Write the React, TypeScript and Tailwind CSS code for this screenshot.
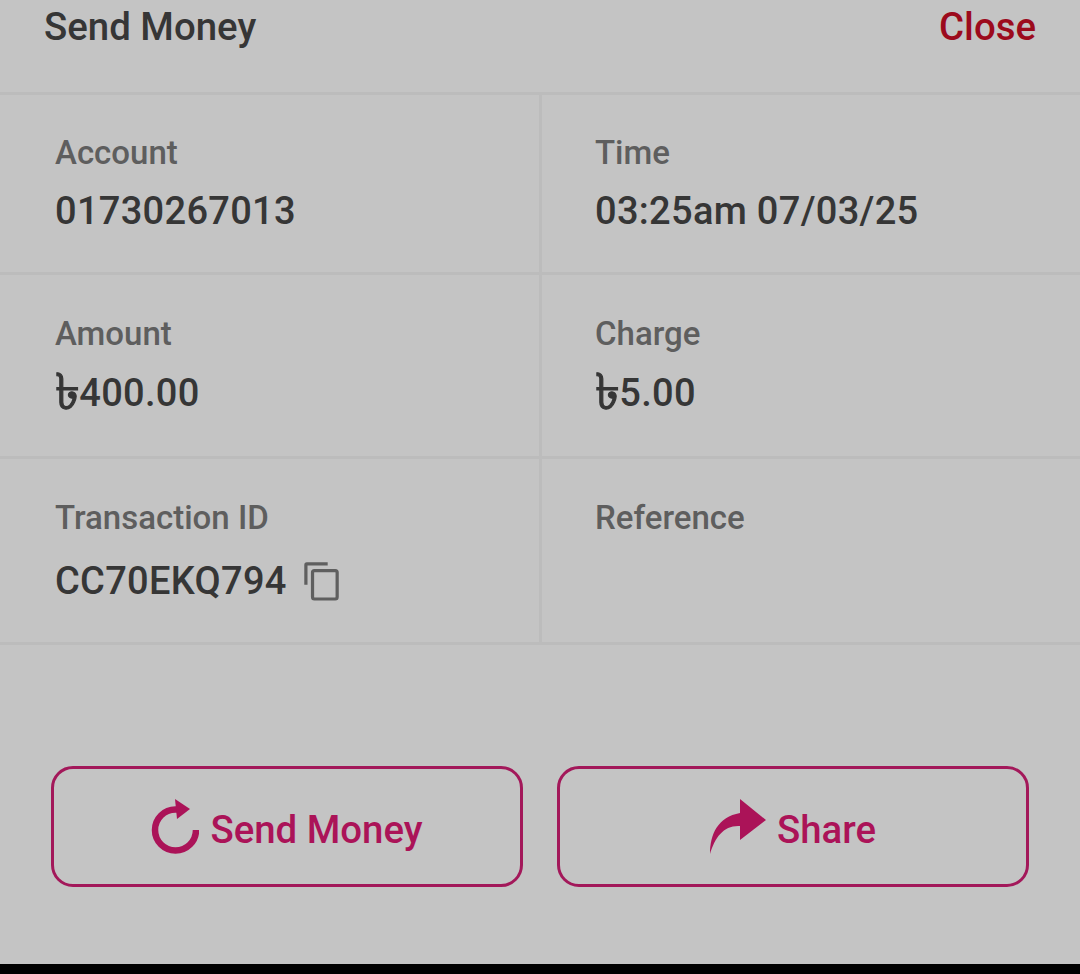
const font = { fontFamily: 'Roboto, "Noto Sans", sans-serif' };

function Value({ value }: { value: string }) {
  if (value.startsWith("৳")) {
    return (
      <span className="flex items-center">
        <span className="text-[50px] leading-[44px] font-normal mr-[-1px] mt-[-2px] [-webkit-text-stroke:1.2px_#363636]">৳</span>
        <span>{value.slice(1)}</span>
      </span>
    );
  }
  return <span>{value}</span>;
}

function Cell({ label, value, icon, pad, gap, border }: { label: string; value?: string; icon?: boolean; pad: string; gap?: string; border?: boolean }) {
  return (
    <div className={`${pad} ${border ? "border-r-[3px] border-[#bcbcbc]" : ""}`}>
      <div className="text-[33px] leading-[40px] font-medium text-[#5e5e5e]">{label}</div>
      {value && (
        <div className={`${gap} flex items-center text-[38px] leading-[44px] font-medium text-[#363636] tracking-[0.3px]`}>
          <Value value={value} />
          {icon && (
            <svg className="ml-[17px] w-[36px] h-[40px]" viewBox="0 0 38 42" fill="none" stroke="#5f5f5f" strokeWidth="3.4">
              <path d="M2 25V4a1 1 0 0 1 1-1h22" />
              <rect x="9" y="10" width="26" height="30" rx="2" />
            </svg>
          )}
        </div>
      )}
    </div>
  );
}

function Row({ children, className }: { children: React.ReactNode; className: string }) {
  return <div className={`grid grid-cols-[542px_1fr] border-b-[3px] border-[#bcbcbc] ${className}`}>{children}</div>;
}

export default function App() {
  return (
    <div style={font} className="w-[1080px] h-[974px] bg-[#c4c4c4] flex flex-col overflow-hidden">
      <div className="h-[95px] border-b-[3px] border-[#bcbcbc] flex justify-between items-start pl-[44px] pr-[44px] pt-[5px]">
        <span className="text-[38.4px] leading-[44px] font-medium text-[#363636]">Send Money</span>
        <span className="text-[38.4px] leading-[44px] font-medium text-[#9c0a1c]">Close</span>
      </div>
      <Row className="h-[180px]">
        <Cell pad="pt-[38px] pl-[55px]" gap="mt-[16px]" border label="Account" value="01730267013" />
        <Cell pad="pt-[38px] pl-[53px]" gap="mt-[16px]" label="Time" value="03:25am 07/03/25" />
      </Row>
      <Row className="h-[184px]">
        <Cell pad="pt-[39px] pl-[55px]" gap="mt-[17px]" border label="Amount" value="৳400.00" />
        <Cell pad="pt-[39px] pl-[53px]" gap="mt-[17px]" label="Charge" value="৳5.00" />
      </Row>
      <Row className="h-[186px]">
        <Cell pad="pt-[39px] pl-[55px]" gap="mt-[21px]" border label="Transaction ID" value="CC70EKQ794" icon />
        <Cell pad="pt-[39px] pl-[53px]" label="Reference" />
      </Row>
      <div className="mt-[121px] pl-[51px] pr-[51px] flex justify-between">
        <button className="w-[472px] h-[121px] rounded-[22px] border-[3px] border-[#a3185a] flex items-center justify-center text-[38.4px] font-medium text-[#ab1358]">
          <svg className="w-[48px] h-[56px] mr-[11px] mt-[1px]" viewBox="0 0 48 56" fill="none">
            <path d="M45 31a20.5 20.5 0 1 1-20.5-20.5H32" stroke="#ab1358" strokeWidth="6.5" />
            <path d="M24 0l15 10-13 10z" fill="#ab1358" />
          </svg>
          <span className="mt-[6px]">Send Money</span>
        </button>
        <button className="w-[472px] h-[121px] rounded-[22px] border-[3px] border-[#a3185a] flex items-center justify-center text-[38.4px] font-medium text-[#ab1358]">
          <svg className="w-[56px] h-[56px] mr-[11px] mt-[1px]" viewBox="0 0 56 56" fill="#ab1358">
            <path d="M0 55C0 35 8 18 30 14V0l26 21-26 20V27C14 26 5 38 0 55z" />
          </svg>
          <span className="mt-[6px]">Share</span>
        </button>
      </div>
      <div className="mt-auto h-[10px] bg-black" />
    </div>
  );
}
